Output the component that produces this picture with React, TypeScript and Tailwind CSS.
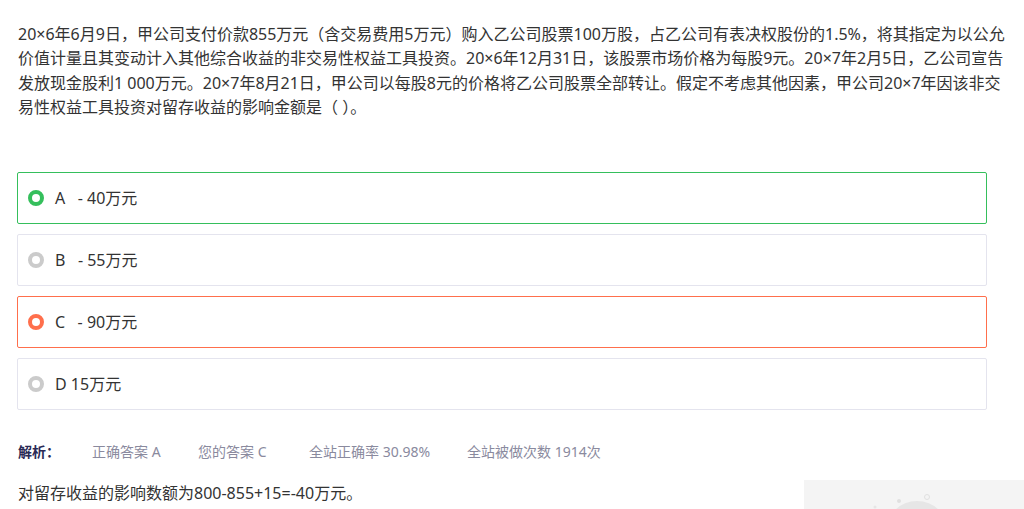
import React from 'react';

const options = [
  { key: 'A', text: 'A   - 40万元', state: 'right' },
  { key: 'B', text: 'B   - 55万元', state: 'none' },
  { key: 'C', text: 'C   - 90万元', state: 'wrong' },
  { key: 'D', text: 'D 15万元', state: 'none' },
];

function Option({ text, state }: { text: string; state: string }) {
  const box =
    state === 'right'
      ? 'border-[#35bf5c]'
      : state === 'wrong'
        ? 'border-[#ff6f4c]'
        : 'border-[#e4e4ee]';
  const ring =
    state === 'right'
      ? 'border-[#35bf5c]'
      : state === 'wrong'
        ? 'border-[#ff6f4c]'
        : 'border-[#cbcbcb]';
  return (
    <div className={`flex h-[52px] w-[970px] items-center rounded-[2px] border bg-white pl-[10px] ${box}`}>
      <span className={`h-[16px] w-[16px] shrink-0 rounded-full border-[4px] ${ring}`} />
      <span className="ml-[11px] whitespace-pre text-[16px] text-[#333]">{text}</span>
    </div>
  );
}

export default function App() {
  return (
    <div
      className="relative h-[509px] w-[1024px] overflow-hidden bg-white"
      style={{ fontFamily: '"Noto Sans", "Noto Sans CJK SC", sans-serif' }}
    >
      <div className="pl-[17px] pr-[12px] pt-[22px]">
        <p className="pl-[1px] text-[16px] leading-[24.4px] text-[#333]">
          20×6年6月9日，甲公司支付价款855万元（含交易费用5万元）购入乙公司股票100万股，占乙公司有表决权股份的1.5%，将其指定为以公允价值计量且其变动计入其他综合收益的非交易性权益工具投资。20×6年12月31日，该股票市场价格为每股9元。20×7年2月5日，乙公司宣告发放现金股利1 000万元。20×7年8月21日，甲公司以每股8元的价格将乙公司股票全部转让。假定不考虑其他因素，甲公司20×7年因该非交易性权益工具投资对留存收益的影响金额是（ ）。
        </p>

        <div className="mt-[52px] flex flex-col gap-[10px]">
          {options.map((o) => (
            <Option key={o.key} text={o.text} state={o.state} />
          ))}
        </div>

        <div className="mt-[33px] flex items-center pl-[1px] text-[14px] leading-[18px] text-[#8a8a9e]">
          <span className="w-[74px] font-bold text-[#2a2a55]">解析：</span>
          <span className="w-[106px]">正确答案 A</span>
          <span className="w-[111px]">您的答案 C</span>
          <span className="w-[158px]">全站正确率 30.98%</span>
          <span>全站被做次数 1914次</span>
        </div>

        <p className="mt-[20px] pl-[1px] text-[16px] leading-[24px] text-[#333]">
          对留存收益的影响数额为800-855+15=-40万元。
        </p>
      </div>

      <div className="absolute left-[804px] top-[480px] h-[60px] w-[230px] bg-[#f4f4f4]">
        <svg width="230" height="60" viewBox="0 0 230 60">
          <circle cx="113" cy="52" r="31" fill="#e6e6e6" />
          <circle cx="95" cy="21" r="2" fill="#e0e0e0" />
          <circle cx="123" cy="17" r="2.5" fill="none" stroke="#e0e0e0" strokeWidth="1" />
          <circle cx="71" cy="27" r="1.5" fill="#e6e6e6" />
        </svg>
      </div>
    </div>
  );
}
